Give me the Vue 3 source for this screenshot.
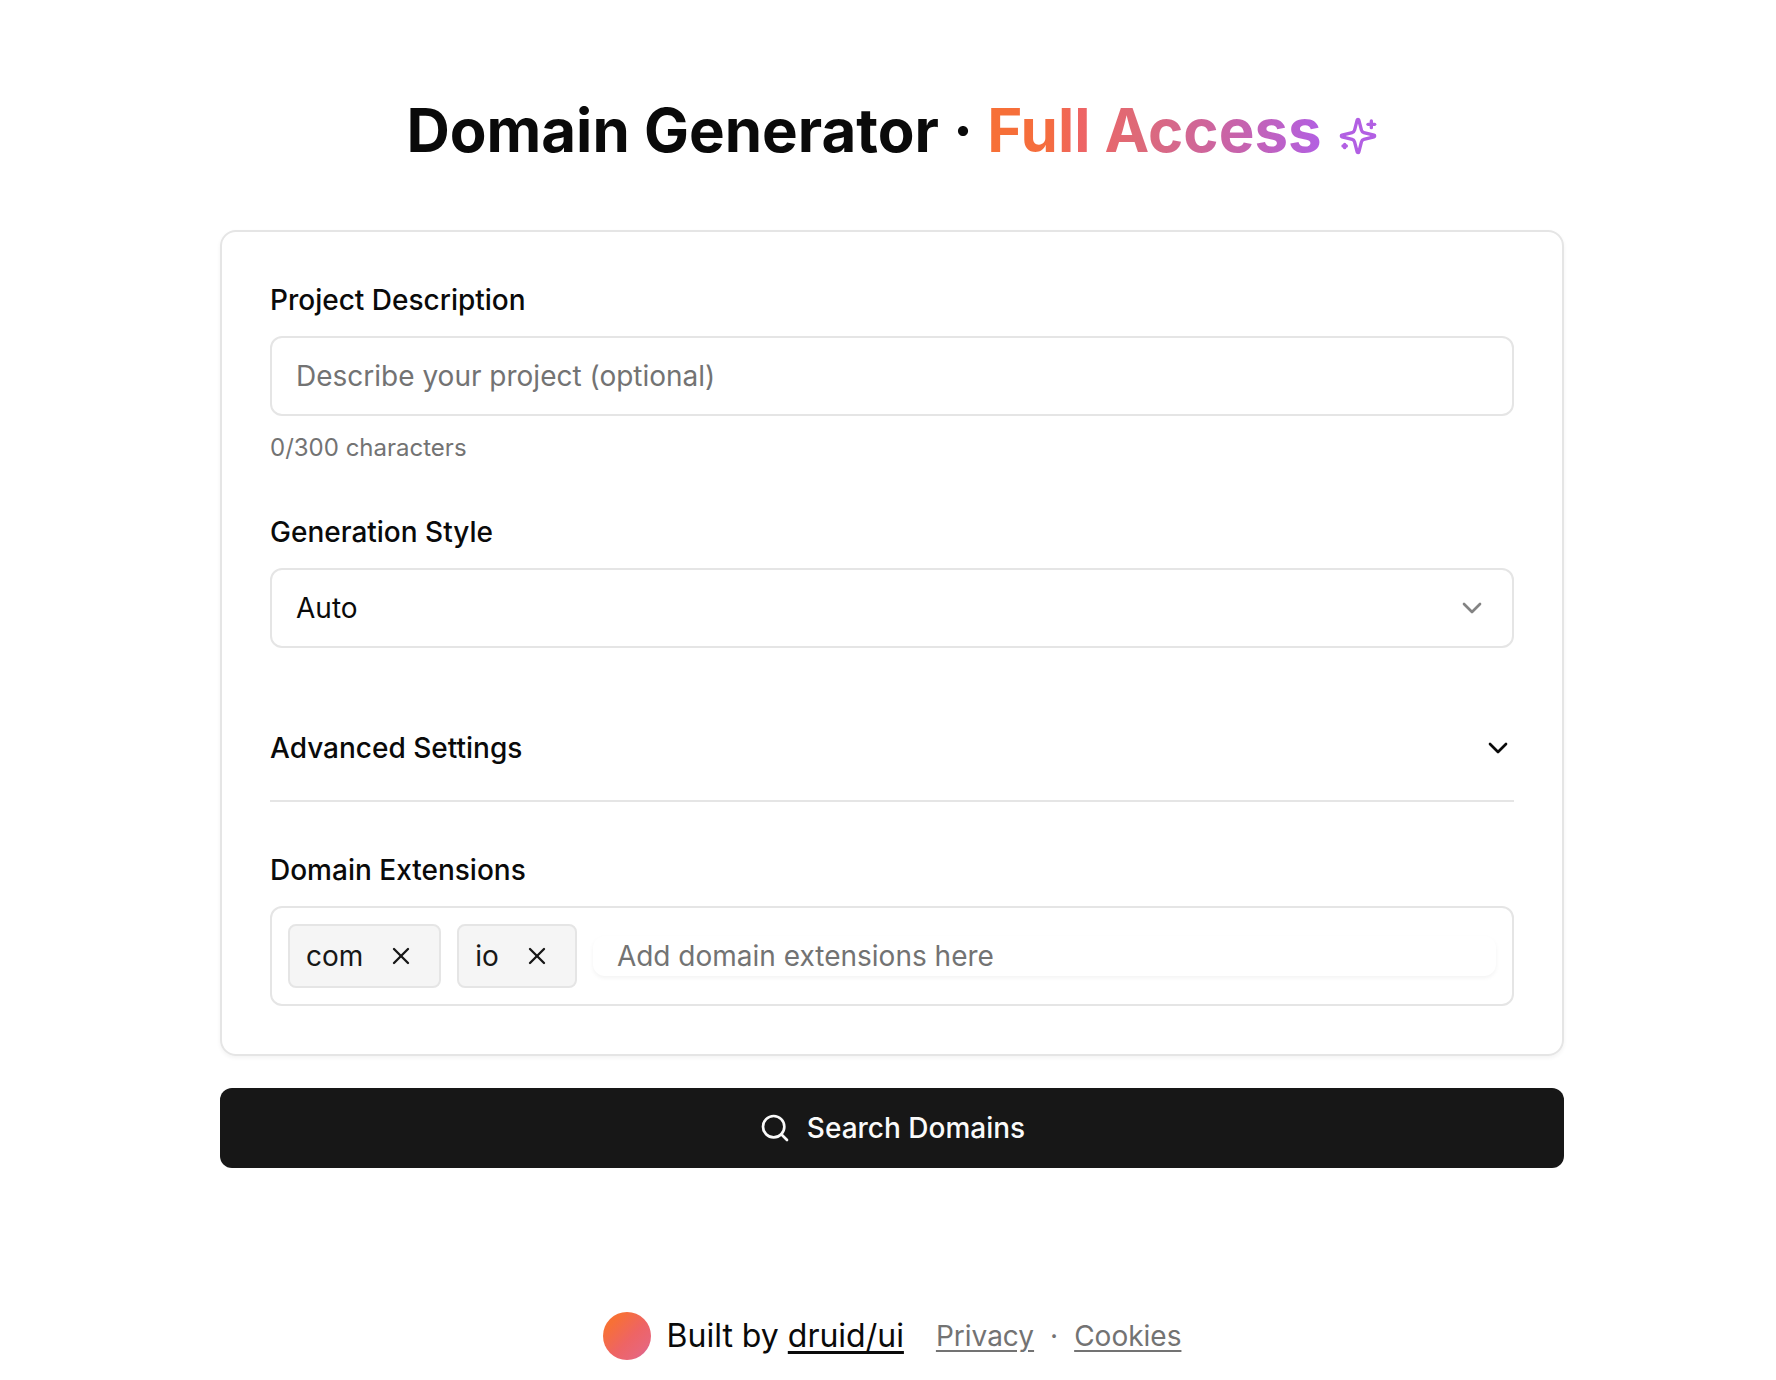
<script setup>

import {
  computed,
  ref
} from 'vue';

const maxLength = 300;
const description = ref('');
const style = ref('auto');
const advancedOpen = ref(false);
const extensions = ref(['com', 'io']);
const newExtension = ref('');

const styles = [
  { value: 'auto', label: 'Auto' },
  { value: 'short', label: 'Short' },
  { value: 'brandable', label: 'Brandable' }
];

const charCount = computed(() => description.value.length);

const addExtension = () => {
  const value = newExtension.value.trim().replace(/^\./, '');
  if (value && !extensions.value.includes(value)) {
    extensions.value.push(value);
  }
  newExtension.value = '';
};

const removeExtension = (index) => {
  extensions.value.splice(index, 1);
};

</script>
<template>
  <div class="page">
    <main class="content">
      <h1 class="title">
        <span>Domain Generator · <span class="title_gradient">Full Access</span></span>
        <svg class="title_icon" viewBox="0 0 24 24" aria-hidden="true">
          <path d="M9.937 15.5A2 2 0 0 0 8.5 14.063l-6.135-1.582a.5.5 0 0 1 0-.962L8.5 9.936A2 2 0 0 0 9.937 8.5l1.582-6.135a.5.5 0 0 1 .963 0L14.063 8.5A2 2 0 0 0 15.5 9.937l6.135 1.581a.5.5 0 0 1 0 .964L15.5 14.063a2 2 0 0 0-1.437 1.437l-1.582 6.135a.5.5 0 0 1-.963 0z" />
          <path d="M20 3v4" />
          <path d="M22 5h-4" />
          <path d="M4 17v2" />
          <path d="M5 18H3" />
        </svg>
      </h1>

      <form class="form" @submit.prevent>
        <div class="card">
          <div class="field">
            <label for="description">Project Description</label>
            <input id="description" v-model="description" class="control" type="text" :maxlength="maxLength" placeholder="Describe your project (optional)">
            <p class="hint">{{ charCount }}/{{ maxLength }} characters</p>
          </div>

          <div class="field">
            <label for="style">Generation Style</label>
            <div class="select_box">
              <select id="style" v-model="style" class="control">
                <option v-for="item in styles" :key="item.value" :value="item.value">{{ item.label }}</option>
              </select>
              <svg class="icon select_icon" viewBox="0 0 24 24" aria-hidden="true">
                <path d="m6 9 6 6 6-6" />
              </svg>
            </div>
          </div>

          <button type="button" class="advanced" :aria-expanded="advancedOpen" @click="advancedOpen = !advancedOpen">
            Advanced Settings
            <svg class="icon" viewBox="0 0 24 24" aria-hidden="true">
              <path d="m6 9 6 6 6-6" />
            </svg>
          </button>

          <div class="field">
            <label for="extensions">Domain Extensions</label>
            <div class="tags">
              <span v-for="(extension, index) in extensions" :key="extension" class="tag">
                {{ extension }}
                <button type="button" class="tag_remove" :aria-label="'Remove ' + extension" @click="removeExtension(index)">
                  <svg viewBox="0 0 24 24" aria-hidden="true">
                    <path d="M18 6 6 18" />
                    <path d="m6 6 12 12" />
                  </svg>
                </button>
              </span>
              <input id="extensions" v-model="newExtension" class="tag_input" type="text" placeholder="Add domain extensions here" @keydown.enter.prevent="addExtension">
            </div>
          </div>
        </div>

        <button type="submit" class="search">
          <svg class="icon" viewBox="0 0 24 24" aria-hidden="true">
            <circle cx="11" cy="11" r="8" />
            <path d="m21 21-4.3-4.3" />
          </svg>
          Search Domains
        </button>
      </form>
    </main>

    <footer class="footer">
      <div class="built">
        <span class="logo"></span>
        <p>Built by <a href="#">druid/ui</a></p>
      </div>
      <nav class="links">
        <a href="#">Privacy</a>
        <span>·</span>
        <a href="#">Cookies</a>
      </nav>
    </footer>
  </div>
</template>

<style>
  body {
    margin: 0;
    background: #fff;
  }
</style>

<style scoped>
  .page {
    box-sizing: border-box;
    min-height: 100vh;
    padding: 94px 32px 20px 40px;
    font-family: Inter, "Liberation Sans", sans-serif;
    font-size: 28px;
    line-height: 40px;
    color: #0a0a0a;
    -webkit-font-smoothing: antialiased;
  }

  .page *, .page *::before {
    box-sizing: border-box;
  }

  .content {
    max-width: 1344px;
    margin: 0 auto;
  }

  svg {
    flex: none;
    fill: none;
    stroke: currentColor;
    stroke-width: 2;
    stroke-linecap: round;
    stroke-linejoin: round;
  }

  .icon {
    width: 32px;
    height: 32px;
  }

  .title {
    display: flex;
    align-items: center;
    justify-content: center;
    gap: 16px;
    margin: 0 0 64px;
    font-size: 60px;
    font-weight: 700;
    line-height: 72px;
  }

  .title_gradient {
    background: linear-gradient(90deg, #f77036 0%, #f56d3e 18%, #ee6464 28%, #de6a78 45%, #c763ac 75%, #b25fe3 100%);
    background-clip: text;
    -webkit-background-clip: text;
    color: transparent;
  }

  .title_icon {
    width: 40px;
    height: 40px;
    margin-top: 12px;
    color: #b25fe3;
  }

  .form {
    display: flex;
    flex-direction: column;
    gap: 32px;
  }

  .card {
    display: flex;
    flex-direction: column;
    gap: 48px;
    padding: 48px;
    border: 2px solid #e5e5e5;
    border-radius: 16px;
    box-shadow: 0 2px 4px rgba(0, 0, 0, 0.05);
  }

  .field {
    display: flex;
    flex-direction: column;
    gap: 16px;
  }

  label {
    font-weight: 500;
  }

  input, select, button {
    font: inherit;
    color: inherit;
  }

  input::placeholder {
    color: #737373;
    opacity: 1;
  }

  .control {
    width: 100%;
    height: 80px;
    padding: 0 24px;
    border: 2px solid #e5e5e5;
    border-radius: 12px;
    background: transparent;
  }

  .hint {
    margin: 0;
    font-size: 24px;
    line-height: 32px;
    color: #737373;
  }

  .select_box {
    display: grid;
    align-items: center;
  }

  .select_box > * {
    grid-area: 1 / 1;
  }

  select {
    appearance: none;
  }

  .select_icon {
    justify-self: end;
    margin-right: 26px;
    opacity: 0.5;
    pointer-events: none;
  }

  .advanced {
    display: flex;
    align-items: center;
    justify-content: space-between;
    padding: 32px 0;
    border: 0;
    border-bottom: 2px solid #e5e5e5;
    background: none;
    font-weight: 500;
    text-align: left;
  }

  .tags {
    display: flex;
    flex-wrap: wrap;
    align-items: center;
    gap: 16px;
    padding: 16px;
    border: 2px solid #e5e5e5;
    border-radius: 12px;
  }

  .tag {
    display: flex;
    align-items: center;
    height: 64px;
    padding-left: 16px;
    border: 2px solid #e5e5e5;
    border-radius: 8px;
    background: #f5f5f5;
    color: #171717;
  }

  .tag_remove {
    display: flex;
    padding: 0 24px;
    border: 0;
    background: none;
  }

  .tag_remove svg {
    width: 28px;
    height: 28px;
  }

  .tag_input {
    flex: 1;
    min-width: 0;
    height: 40px;
    padding: 0 24px;
    border: 0;
    border-radius: 12px;
    background: transparent;
    box-shadow: 0 2px 4px rgba(0, 0, 0, 0.05);
  }

  .search {
    display: flex;
    align-items: center;
    justify-content: center;
    gap: 16px;
    height: 80px;
    border: 0;
    border-radius: 12px;
    background: #171717;
    color: #fafafa;
    font-weight: 500;
  }

  .footer {
    display: flex;
    flex-wrap: wrap;
    align-items: center;
    justify-content: center;
    gap: 32px;
    margin-top: 144px;
  }

  .built {
    display: flex;
    align-items: center;
    gap: 16px;
    font-size: 32px;
    line-height: 48px;
  }

  .built p {
    margin: 0;
  }

  .logo {
    width: 48px;
    height: 48px;
    border-radius: 50%;
    background: linear-gradient(135deg, #f77036 20%, #ee6464 55%, #e8667a 80%, #c763ac 100%);
  }

  .footer a {
    color: inherit;
    text-underline-offset: 4px;
  }

  .links {
    display: flex;
    gap: 16px;
    color: #737373;
  }
</style>
